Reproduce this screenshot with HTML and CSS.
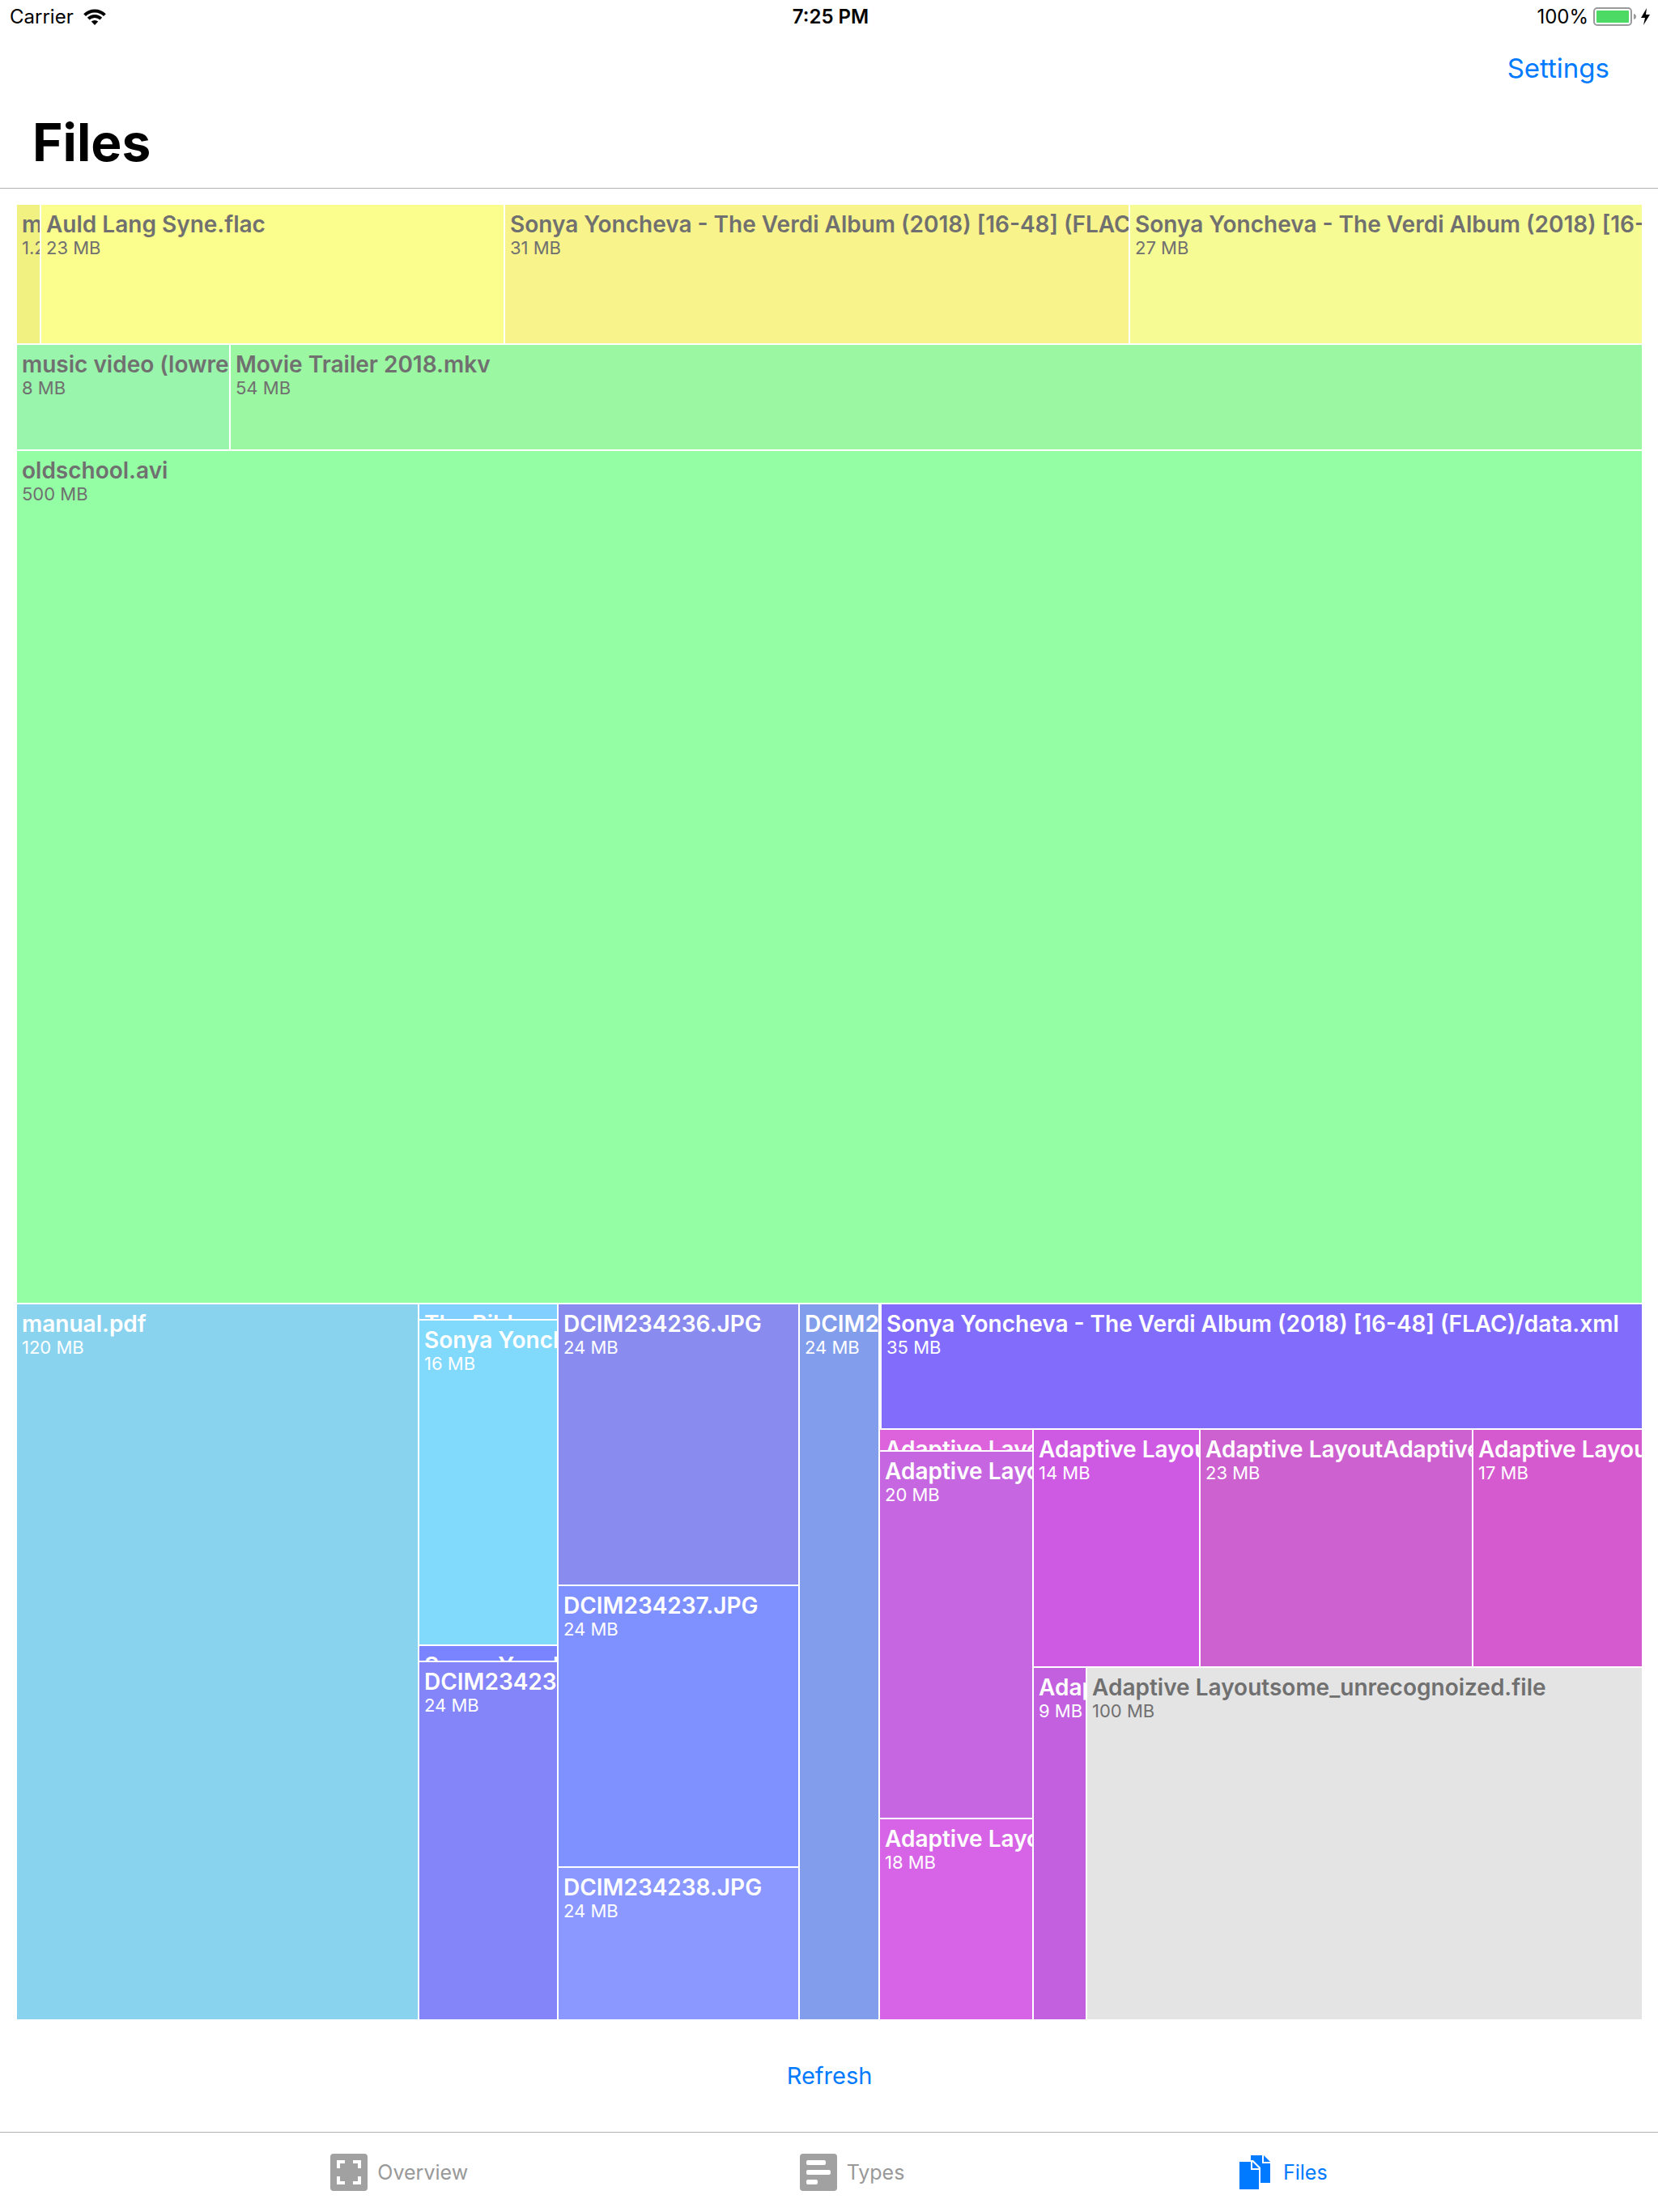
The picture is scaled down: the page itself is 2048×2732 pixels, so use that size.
FILE: index.html
```html
<!DOCTYPE html>
<html lang="en">
<head>
<meta charset="utf-8">
<meta name="viewport" content="width=device-width, initial-scale=1">
<title>Files</title>
<link rel="stylesheet" href="styles.css">
</head>
<body>
<div class="status-bar">
  <div class="status-side">
    <span>Carrier</span>
    <svg class="wifi" width="28" height="20" viewBox="0 0 28 20" aria-hidden="true">
      <path d="M14 20 9.8 15.6A6 6 0 0 1 18.2 15.6Z" fill="#000"/>
      <path d="M6.2 12.2A11 11 0 0 1 21.8 12.2M1.6 7.6A17.6 17.6 0 0 1 26.4 7.6" fill="none" stroke="#000" stroke-width="4"/>
    </svg>
  </div>
  <time class="status-time">7:25 PM</time>
  <div class="status-side status-end">
    <span>100%</span>
    <svg class="battery" width="72" height="24" viewBox="0 0 72 24" aria-hidden="true">
      <rect x="1" y="1" width="46" height="21" rx="4" fill="none" stroke="#9b9b9b" stroke-width="2"/>
      <rect x="4" y="4" width="40" height="15" rx="1" fill="#4cd964"/>
      <path d="M50 8Q53 9 53 11.500Q53 14 50 15Z" fill="#9b9b9b"/>
      <path d="M66 1 59 13H64L62 22 70 9H65Z" fill="#000"/>
    </svg>
  </div>
</div>

<header class="header">
  <div class="nav"><button class="text-button" type="button">Settings</button></div>
  <h1 class="title">Files</h1>
</header>

<main class="main">
  <div class="treemap">
    <div class="row" style="flex-grow:171">
      <div class="tile dark" style="flex-grow:28;background:#f0f180"><b>music.mp3</b><span>1.2 MB</span></div>
      <div class="tile dark" style="flex-grow:571;background:#fbfe8d"><b>Auld Lang Syne.flac</b><span>23 MB</span></div>
      <div class="tile dark" style="flex-grow:770;background:#f8f48b"><b>Sonya Yoncheva - The Verdi Album (2018) [16-48] (FLAC)</b><span>31 MB</span></div>
      <div class="tile dark" style="flex-grow:632;background:#f7fb94"><b>Sonya Yoncheva - The Verdi Album (2018) [16-48] (FLAC)</b><span>27 MB</span></div>
    </div>
    <div class="row" style="flex-grow:129">
      <div class="tile dark" style="flex-grow:262;background:#99f4ac"><b>music video (lowres).mp4</b><span>8 MB</span></div>
      <div class="tile dark" style="flex-grow:1743;background:#9bf7a1"><b>Movie Trailer 2018.mkv</b><span>54 MB</span></div>
    </div>
    <div class="tile dark" style="flex-grow:1052;background:#94fea4"><b>oldschool.avi</b><span>500 MB</span></div>
    <div class="row" style="flex-grow:883">
      <div class="tile" style="flex-grow:495;background:#8ad3ef"><b>manual.pdf</b><span>120 MB</span></div>
      <div class="column" style="flex-grow:170">
        <div class="tile" style="flex-grow:18;background:#80cfff"><b>The Bible.epub</b></div>
        <div class="tile" style="flex-grow:400;background:#81d9fc"><b>Sonya Yoncheva</b><span>16 MB</span></div>
        <div class="tile" style="flex-grow:18;background:#7b84ff"><b>Sonya Yoncheva</b></div>
        <div class="tile" style="flex-grow:441;background:#8385f9"><b>DCIM234235.JPG</b><span>24 MB</span></div>
      </div>
      <div class="column" style="flex-grow:296">
        <div class="tile" style="flex-grow:346;background:#8a8bee"><b>DCIM234236.JPG</b><span>24 MB</span></div>
        <div class="tile" style="flex-grow:346;background:#7f90ff"><b>DCIM234237.JPG</b><span>24 MB</span></div>
        <div class="tile" style="flex-grow:187;background:#8a98ff"><b>DCIM234238.JPG</b><span>24 MB</span></div>
      </div>
      <div class="tile" style="flex-grow:97;background:#829deb"><b>DCIM234239.JPG</b><span>24 MB</span></div>
      <div class="column" style="flex-grow:941">
        <div class="tile group-start" style="flex-grow:153;background-color:#816cfb"><b>Sonya Yoncheva - The Verdi Album (2018) [16-48] (FLAC)/data.xml</b><span>35 MB</span></div>
        <div class="row" style="flex-grow:728">
          <div class="column" style="flex-grow:188">
            <div class="tile" style="flex-grow:25;background:#dc63dc"><b>Adaptive Layout</b></div>
            <div class="tile" style="flex-grow:452;background:#c667e1"><b>Adaptive Layout</b><span>20 MB</span></div>
            <div class="tile" style="flex-grow:247;background:#d763e6"><b>Adaptive Layout</b><span>18 MB</span></div>
          </div>
          <div class="column" style="flex-grow:751">
            <div class="row" style="flex-grow:292">
              <div class="tile" style="flex-grow:204;background:#ce5ae4"><b>Adaptive Layout</b><span>14 MB</span></div>
              <div class="tile" style="flex-grow:335;background:#cd61d0"><b>Adaptive LayoutAdaptive Layout</b><span>23 MB</span></div>
              <div class="tile" style="flex-grow:208;background:#d559cf"><b>Adaptive Layout</b><span>17 MB</span></div>
            </div>
            <div class="row" style="flex-grow:434">
              <div class="tile" style="flex-grow:64;background:#c260e0"><b>Adaptive Layout</b><span>9 MB</span></div>
              <div class="tile dark" style="flex-grow:685;background:#e4e4e4"><b>Adaptive Layoutsome_unrecognoized.file</b><span>100 MB</span></div>
            </div>
          </div>
        </div>
      </div>
    </div>
  </div>
  <div class="actions"><button class="text-button refresh" type="button">Refresh</button></div>
</main>

<nav class="tab-bar">
  <a class="tab" href="#overview">
    <svg width="46" height="46" viewBox="0 0 46 46" aria-hidden="true">
      <rect width="46" height="46" rx="4" fill="#a1a1a1"/>
      <path d="M10 18V10H18M28 10H36V18M36 28V36H28M18 36H10V28" fill="none" stroke="#fff" stroke-width="4"/>
    </svg>
    <span>Overview</span>
  </a>
  <a class="tab" href="#types">
    <svg width="46" height="46" viewBox="0 0 46 46" aria-hidden="true">
      <rect width="46" height="46" rx="4" fill="#a1a1a1"/>
      <g fill="#fff"><rect x="8" y="8" width="24" height="6" rx="2"/><rect x="8" y="20" width="30" height="6" rx="2"/><rect x="8" y="32" width="14" height="6" rx="2"/></g>
    </svg>
    <span>Types</span>
  </a>
  <a class="tab active" href="#files" aria-current="page">
    <svg width="46" height="46" viewBox="0 0 46 46" fill="#007aff" aria-hidden="true">
      <path d="M4 10H18V20H28V44H4ZM20 10 28 18H20ZM18 2H32V12H42V36H30V17L21 8H18ZM34 2 42 10H34Z"/>
    </svg>
    <span>Files</span>
  </a>
</nav>
</body>
</html>
```

FILE: styles.css
```css
* {
  box-sizing: border-box;
}

body {
  margin: 0;
  min-height: 100vh;
  display: flex;
  flex-direction: column;
  background: #fff;
  color: #000;
  font-family: Inter, "Liberation Sans", sans-serif;
}

.status-bar {
  display: flex;
  align-items: center;
  height: 40px;
  padding: 2px 8px 0 12px;
  font-size: 24px;
  line-height: 28px;
}

.status-side {
  flex: 1;
  display: flex;
  align-items: center;
  gap: 12px;
}

.status-end {
  justify-content: flex-end;
  gap: 6px;
}

.status-time {
  font-weight: 600;
}

.header {
  padding: 0 60px 8px 40px;
  border-bottom: 1px solid #b2b2b2;
}

.nav {
  display: flex;
  justify-content: flex-end;
  align-items: center;
  height: 88px;
}

.text-button {
  padding: 0;
  border: 0;
  background: none;
  color: #007aff;
  font-family: inherit;
  font-size: 33px;
  line-height: 42px;
}

.title {
  margin: 0;
  font-size: 64px;
  font-weight: 700;
  line-height: 96px;
}

.main {
  flex: 1;
  display: flex;
  flex-direction: column;
  padding: 20px 20px 0 21px;
}

.treemap {
  flex: 1;
  display: flex;
  flex-direction: column;
  gap: 2px;
}

.row,
.column {
  flex: 1 1 0;
  display: flex;
  gap: 2px;
  min-width: 0;
  min-height: 0;
}

.column {
  flex-direction: column;
}

/* Padding sits on the text so that thin tiles can shrink below it. */
.tile {
  flex: 1 1 0;
  min-width: 0;
  min-height: 0;
  overflow: hidden;
  color: #fff;
  white-space: nowrap;
}

.tile b,
.tile span {
  display: block;
  overflow: hidden;
  padding-left: 6px;
}

.tile b {
  padding-top: 7px;
  font-size: 28px;
  font-weight: 600;
  line-height: 34px;
}

.tile span {
  font-size: 22px;
  line-height: 24px;
}

.group-start {
  border-left: 2px solid #fff;
}

.dark {
  color: #707070;
}

.actions {
  display: flex;
  justify-content: center;
  align-items: center;
  height: 139px;
}

.refresh {
  font-size: 29px;
  line-height: 36px;
}

.tab-bar {
  display: flex;
  justify-content: center;
  align-items: center;
  gap: 20%;
  height: 99px;
  border-top: 1px solid #b2b2b2;
}

.tab {
  display: flex;
  align-items: center;
  gap: 12px;
  color: #999;
  font-size: 25px;
  line-height: 32px;
  text-decoration: none;
}

.active {
  color: #007aff;
}
```
